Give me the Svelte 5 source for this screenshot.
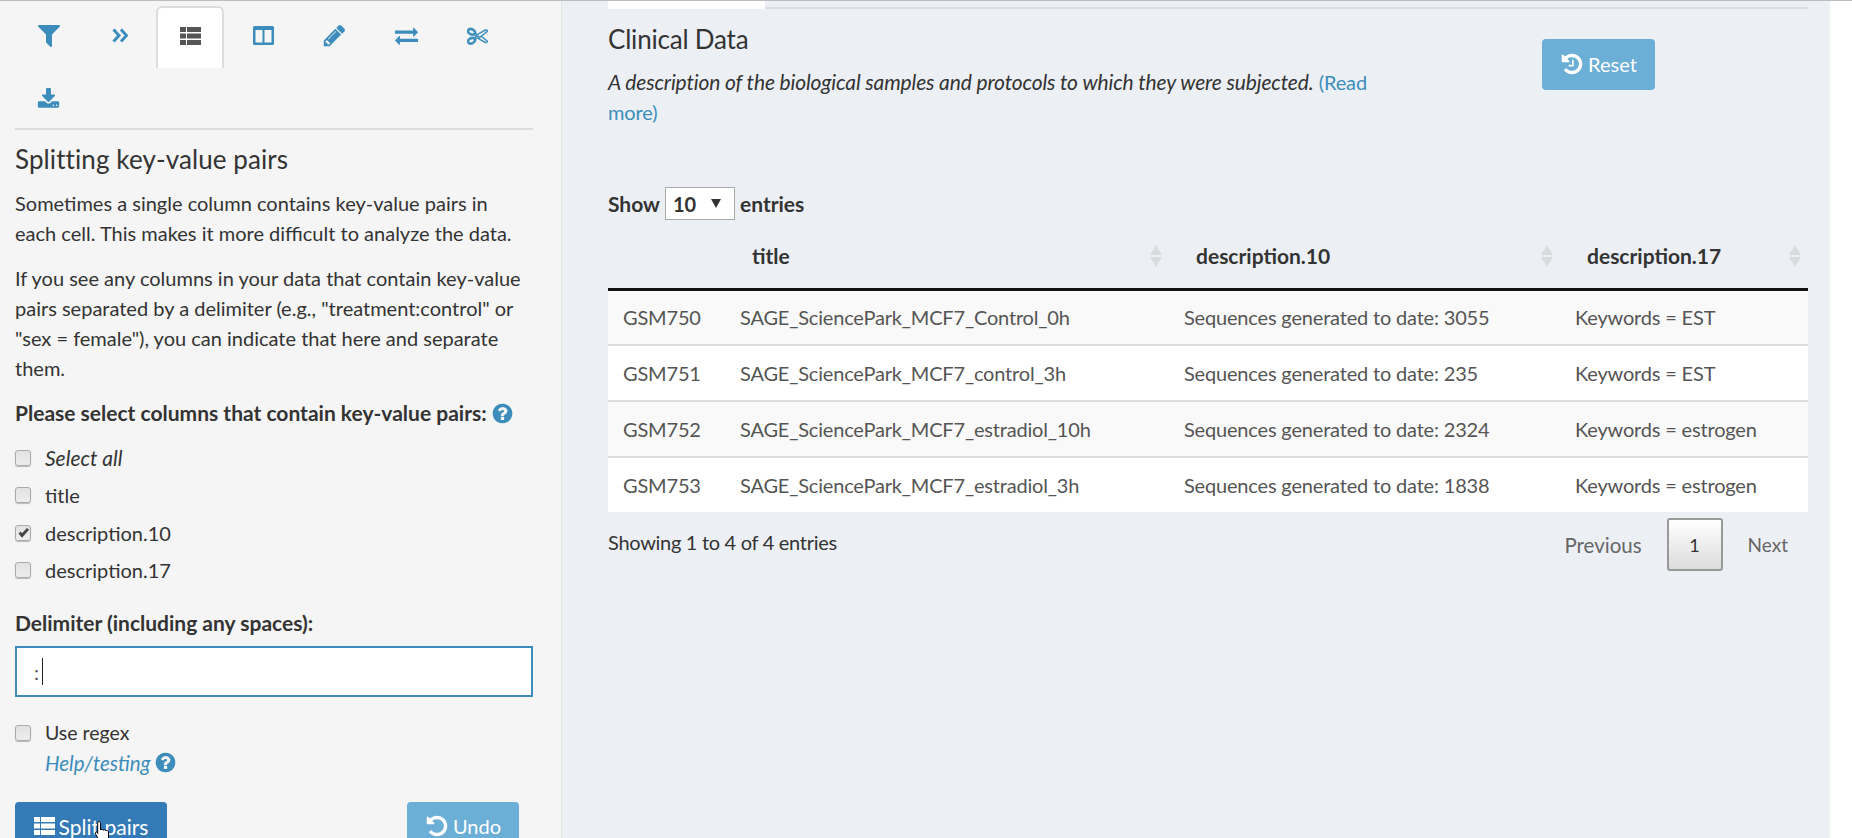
<script>
  const P = {
    filter: "M1595 295q17 41-14 70l-493 493v742q0 42-39 59-13 5-25 5-27 0-45-19l-256-256q-19-19-19-45v-486l-493-493q-31-29-14-70 17-39 59-39h1280q42 0 59 39z",
    pencil: "M491 1536l91-91-235-235-91 91v107h128v128h107zm523-928q0-22-22-22-10 0-17 7l-542 542q-7 7-7 17 0 22 22 22 10 0 17-7l542-542q7-7 7-17zm-54-192l416 416-832 832h-416v-416zm683 96q0 53-37 90l-166 166-416-416 166-165q36-38 90-38 53 0 91 38l235 234q37 39 37 91z",
    exchange: "M1792 1184v192q0 13-9.5 22.5t-22.5 9.5h-1376v192q0 13-9.5 22.5t-22.5 9.5q-12 0-24-10l-319-320q-9-9-9-22 0-14 9-23l320-320q9-9 23-9 13 0 22.5 9.5t9.5 22.5v192h1376q13 0 22.5 9.5t9.5 22.5zm0-544q0 14-9 23l-320 320q-9 9-23 9-13 0-22.5-9.5t-9.5-22.5v-192h-1376q-13 0-22.5-9.5t-9.5-22.5v-192q0-13 9.5-22.5t22.5-9.5h1376v-192q0-14 9-23t23-9q12 0 24 10l319 319q9 9 9 23z",
    scissors: "M960 896q26 0 45 19t19 45-19 45-45 19-45-19-19-45 19-45 45-19zm300 64l507 398q28 20 25 56-5 35-35 51l-128 64q-13 7-29 7-17 0-31-8l-690-387-110 66q-8 4-12 5 14 49 10 97-7 77-56 147.5t-132 123.5q-132 84-277 84-136 0-222-78-90-84-79-207 7-76 56-147t131-124q132-84 278-84 83 0 151 31 9-13 22-22l122-73-122-73q-13-9-22-22-68 31-151 31-146 0-278-84-82-53-131-124t-56-147q-5-59 15.5-113t63.5-93q85-79 222-79 145 0 277 84 83 52 132 123t56 148q4 48-10 97 4 1 12 5l110 66 690-387q14-8 31-8 16 0 29 7l128 64q30 16 35 51 3 36-25 56zm-681-260q46-42 21-108t-106-117q-92-59-192-59-74 0-113 36-46 42-21 108t106 117q92 59 192 59 74 0 113-36zm-85 745q81-51 106-117t-21-108q-39-36-113-36-100 0-192 59-81 51-106 117t21 108q39 36 113 36 100 0 192-59zm178-613l96 58v-11q0-36 33-56l14-8-79-47-26 26q-3 3-10 11t-12 12q-2 2-4 3.5t-3 2.5zm224 224l96 32 736-576-128-64-768 431v113l-160 96 9 8q2 2 7 6 4 4 11 12t11 12l26 26zm704 416l128-64-520-408-177 138q-2 3-13 7z",
    download: "M1344 1344q0-26-19-45t-45-19-45 19-19 45 19 45 45 19 45-19 19-45zm256 0q0-26-19-45t-45-19-45 19-19 45 19 45 45 19 45-19 19-45zm128-224v320q0 40-28 68t-68 28h-1472q-40 0-68-28t-28-68v-320q0-40 28-68t68-28h465l135 136q58 56 136 56t136-56l136-136h464q40 0 68 28t28 68zm-325-569q17 41-14 70l-448 448q-18 19-45 19t-45-19l-448-448q-31-29-14-70 17-39 59-39h256v-448q0-26 19-45t45-19h256q26 0 45 19t19 45v448h256q42 0 59 39z",
    question: "M1024 1376v-192q0-14-9-23t-23-9h-192q-14 0-23 9t-9 23v192q0 14 9 23t23 9h192q14 0 23-9t9-23zm256-672q0-88-55.5-163t-138.5-116-170-41q-243 0-371 213-15 24 8 42l132 100q7 6 19 6 16 0 25-12 53-68 86-92 34-24 86-24 48 0 85.5 26t37.5 59q0 38-20 61t-68 45q-63 28-115.5 86.5t-52.5 125.5v36q0 14 9 23t23 9h192q14 0 23-9t9-23q0-19 21.5-49.5t54.5-49.5q32-18 49-28.5t46-35 44.5-48 28-60.5 12.5-81zm384 192q0 209-103 385.5t-279.5 279.5-385.5 103-385.5-103-279.5-279.5-103-385.5 103-385.5 279.5-279.5 385.5-103 385.5 103 279.5 279.5 103 385.5z",
    undo: "M1664 896q0 156-61 298t-164 245-245 164-298 61q-172 0-327-72.5t-264-204.5q-7-10-6.5-22.5t8.5-20.5l137-138q10-9 25-9 16 2 23 12 73 95 179 147t225 52q104 0 198.5-40.5t163.5-109.5 109.5-163.5 40.5-198.5-40.5-198.5-109.5-163.5-163.5-109.5-198.5-40.5q-98 0-188 35.5t-160 101.5l137 138q31 30 14 69-17 40-59 40h-448q-26 0-45-19t-19-45v-448q0-42 40-59 39-17 69 14l130 129q107-101 244.5-156.5t284.5-55.5q156 0 298 61t245 164 164 245 61 298z",
    hands: "M1024 608v448q0 14-9 23t-23 9h-320q-14 0-23-9t-9-23v-64q0-14 9-23t23-9h224v-352q0-14 9-23t23-9h64q14 0 23 9t9 23z"
  };
  const thList = [[0,0,6,5],[7,0,14,5],[0,6.5,6,5],[7,6.5,14,5],[0,13,6,5],[7,13,14,5]];
  const rows = [
    ["GSM750","SAGE_SciencePark_MCF7_Control_0h","Sequences generated to date: 3055","Keywords = EST"],
    ["GSM751","SAGE_SciencePark_MCF7_control_3h","Sequences generated to date: 235","Keywords = EST"],
    ["GSM752","SAGE_SciencePark_MCF7_estradiol_10h","Sequences generated to date: 2324","Keywords = estrogen"],
    ["GSM753","SAGE_SciencePark_MCF7_estradiol_3h","Sequences generated to date: 1838","Keywords = estrogen"]
  ];
  const checks = [
    { label: "Select all", em: true, on: false },
    { label: "title", on: false },
    { label: "description.10", on: true },
    { label: "description.17", on: false }
  ];
  const heads = ["title","description.10","description.17"];
</script>

{#snippet fa(d, size, heavy = 0)}
  <svg class="fa" width={size} height={size} viewBox="0 0 1792 1792"><path {d} fill="currentColor" stroke={heavy ? "currentColor" : "none"} stroke-width={heavy} stroke-linejoin="round" /></svg>
{/snippet}
{#snippet list()}
  <svg class="fa" width="21" height="18" viewBox="0 0 21 18">
    {#each thList as r}<rect x={r[0]} y={r[1]} width={r[2]} height={r[3]} fill="currentColor" />{/each}
  </svg>
{/snippet}
{#snippet box(on)}
  <span class="box">
    {#if on}
      <svg width="13" height="12" viewBox="0 0 13 12"><path d="M1.5 6.5 L3.6 4.6 L5 6.3 L10 1 L12 2.8 L5 10.8 Z" fill="#444" /></svg>
    {/if}
  </span>
{/snippet}

<div class="page">
  <aside class="side">
    <nav class="tabs">
      <a class="tab lead">{@render fa(P.filter, 28)}</a>
      <a class="tab">
        <svg class="fa" width="16" height="15" viewBox="0 0 16 15"><path d="M1.500 1.500L7 7.500L1.500 13.500M9 1.500L14.500 7.500L9 13.500" fill="none" stroke="currentColor" stroke-width="3" /></svg>
      </a>
      <a class="tab active">{@render list()}</a>
      <a class="tab">
        <svg class="fa" width="21" height="19" viewBox="0 0 21 19"><path fill="currentColor" fill-rule="evenodd" d="M1.5 0h18A1.5 1.5 0 0 1 21 1.5v16a1.5 1.5 0 0 1-1.500 1.500h-18A1.500 1.500 0 0 1 0 17.500v-16A1.500 1.500 0 0 1 1.500 0zM2.500 4v12.500h7V4zM11.500 4v12.500h7V4z" /></svg>
      </a>
      <a class="tab">{@render fa(P.pencil, 25)}</a>
      <a class="tab">{@render fa(P.exchange, 23)}</a>
      <a class="tab">{@render fa(P.scissors, 21, 70)}</a>
      <a class="tab second lead">{@render fa(P.download, 23)}</a>
    </nav>

    <h3 class="title">Splitting key-value pairs</h3>
    <p class="para">Sometimes a single column contains key-value pairs in each cell. This makes it more difficult to analyze the data.</p>
    <p class="para">If you see any columns in your data that contain key-value pairs separated by a delimiter (e.g., "treatment:control" or "sex = female"), you can indicate that here and separate them.</p>

    <div class="label q">Please select columns that contain key-value pairs: <span class="help">{@render fa(P.question, 23)}</span></div>
    <div class="checks">
      {#each checks as c}
        <div class="check">{@render box(c.on)}<span class:em={c.em}>{c.label}</span></div>
      {/each}
    </div>

    <div class="label delim">Delimiter (including any spaces):</div>
    <div class="inputwrap">
      <input class="text" value=":" />
      <span class="caret"></span>
    </div>

    <div class="check regex">{@render box(false)}<span>Use regex</span></div>
    <div class="helplink"><em>Help/testing</em> <span class="help">{@render fa(P.question, 23)}</span></div>

    <div class="actions">
      <button class="btn primary">{@render list()}<span>Split pairs</span></button>
      <button class="btn light undo">{@render fa(P.undo, 24)}<span>Undo</span></button>
    </div>
    <svg class="hand" width="20" height="24" viewBox="0 0 20 24">
      <path d="M5 1.500c1 0 1.500.8 1.500 1.800V10c.4-1 2.500-1 2.800.3.500-1 2.500-.8 2.700.6.600-.8 2.500-.5 2.500 1V17c0 2-.6 3-1 4.500H6L1.500 14c-.8-1.500 1-2.500 2-1.500l.2 1V3.300C3.700 2.300 4.200 1.500 5 1.500z" fill="#fff" stroke="#000" stroke-width="1" />
    </svg>
  </aside>

  <main class="main">
    <div class="toptabs"><span class="toptab"></span></div>
    <div class="head">
      <div class="intro">
        <h3 class="ctitle">Clinical Data</h3>
        <p class="desc"><em>A description of the biological samples and protocols to which they were subjected.</em> <a href="#more">(Read more)</a></p>
      </div>
      <button class="btn light reset">{@render fa(P.undo + P.hands, 24)}<span>Reset</span></button>
    </div>

    <div class="show">
      <b>Show</b>
      <span class="sel"><span>10</span><i></i></span>
      <b>entries</b>
    </div>

    <table>
      <colgroup><col class="c1" /><col class="c2" /><col class="c3" /><col class="c4" /></colgroup>
      <thead>
        <tr>
          <th></th>
          {#each heads as h}
            <th>{h}
              <svg class="sort" width="12" height="22" viewBox="0 0 12 22"><path d="M6 0L12 10H0z M0 12H12L6 22z" fill="#d9dbdf" /></svg>
            </th>
          {/each}
        </tr>
      </thead>
      <tbody>
        {#each rows as r}
          <tr>{#each r as c}<td>{c}</td>{/each}</tr>
        {/each}
      </tbody>
    </table>

    <div class="foot">
      <span class="info">Showing 1 to 4 of 4 entries</span>
      <div class="pager">
        <span class="pg prev">Previous</span>
        <span class="cur">1</span>
        <span class="pg next">Next</span>
      </div>
    </div>
  </main>
</div>

<style>
  :global(body) { margin: 0; background: #fff; }
  .page {
    display: flex; width: 1852px; height: 838px; overflow: hidden;
    font-family: "Lato", "Liberation Sans", sans-serif; font-size: 20px; color: #333;
    border-top: 1px solid #bcbcbc; box-sizing: border-box;
  }
  .fa { display: block; }
  .side {
    position: relative; box-sizing: border-box; flex: none; width: 562px; padding: 5px 28px 0 15px;
    background: #f5f5f5; border-right: 1px solid #e4e4e4;
  }
  .tabs { display: flex; flex-wrap: wrap; border-bottom: 2px solid #ddd; }
  .tab {
    box-sizing: border-box; width: 71.500px; height: 62px; display: flex; align-items: center; justify-content: center;
    color: #3c8dbc; padding-bottom: 4px;
  }
  .tab.lead { margin-left: -2px; }
  .tab.active {
    width: 68px; margin-right: 3.500px; background: #fff; color: #555;
    border: 2px solid #ddd; border-bottom: 0; border-radius: 6px 6px 0 0;
  }
  .tab.second { height: 60px; padding: 2px 0 0; }
  .title { margin: 13px 0 0; font-size: 26px; font-weight: 400; line-height: 32px; letter-spacing: .1px; }
  .para { margin: 13px 0 0; line-height: 30px; max-width: 510px; }
  .para + .para { margin-top: 15px; }
  .label { font-size: 21px; font-weight: 700; line-height: 28px; }
  .label.q { margin-top: 16px; display: flex; align-items: center; gap: 4px; }
  .help { color: #3c8dbc; display: inline-block; }
  .checks { margin-top: 17px; display: flex; flex-direction: column; gap: 10px; }
  .check { display: flex; align-items: center; gap: 14px; height: 27.500px; }
  .em { font-style: italic; font-size: 21px; }
  .box {
    box-sizing: border-box; flex: none; width: 16px; height: 16px; border-radius: 3px; display: flex; align-items: center; justify-content: center;
    border: 1px solid #aaa; background: linear-gradient(#e2e2e2, #ededed); box-shadow: 0 1px 1px rgba(0,0,0,.25);
  }
  .label.delim { margin-top: 25px; }
  .inputwrap { position: relative; margin-top: 9px; }
  .text {
    display: block; box-sizing: border-box; width: 100%; height: 51px; padding: 0 0 0 17px; outline: 0;
    border: 2px solid #3c8dbc; background: #fff; font: inherit; color: #555;
  }
  .caret { position: absolute; left: 27px; top: 12px; width: 1px; height: 27px; background: #222; }
  .regex { margin-top: 22px; font-size: 19.500px; }
  .helplink { margin-left: 30px; margin-top: 2px; height: 28px; display: flex; align-items: center; gap: 4px; color: #3c8dbc; font-size: 20.500px; }
  .actions { margin-top: 25px; display: flex; justify-content: space-between; padding-right: 14px; }
  .btn {
    box-sizing: border-box; height: 51px; display: inline-flex; align-items: center; justify-content: center; gap: 4px;
    border: 0; border-radius: 4px; color: #fff; font: inherit; padding: 0 0 2px;
  }
  .primary { width: 152px; background: #337ab7; font-size: 21px; }
  .light { background: #6baed6; }
  .undo { width: 112px; }
  .hand { position: absolute; left: 94px; top: 819px; }
  .main { flex: 1; box-sizing: border-box; margin-right: 22px; padding: 0 22px 0 46px; background: #ecf0f5; }
  .toptabs { height: 6px; border-bottom: 2px solid #dcdee2; }
  .toptab { display: block; width: 157px; height: 8px; background: #fff; }
  .head { display: flex; align-items: flex-start; }
  .intro { width: 760px; }
  .ctitle { margin: 13px 0 0; font-size: 26px; font-weight: 400; line-height: 34px; letter-spacing: -.2px; }
  .desc { margin: 11px 0 0; line-height: 30px; font-size: 21px; letter-spacing: -.13px; }
  .desc a { color: #3c8dbc; text-decoration: none; font-size: 20px; }
  .reset { width: 113px; margin: 30px 0 0 174px; }
  .show { margin-top: 61px; display: flex; align-items: center; gap: 3px; height: 31px; font-size: 21px; }
  .sel {
    box-sizing: border-box; width: 70px; height: 33px; display: flex; align-items: center; justify-content: space-between;
    padding: 0 13px 0 7px; border: 1px solid #aaa; background: #fff; font-weight: 700; font-size: 20px; margin: 0 2px;
  }
  .sel i { width: 0; height: 0; border: 5px solid transparent; border-top: 9px solid #333; border-bottom: 0; }
  table { width: 1200px; table-layout: fixed; border-collapse: collapse; margin-top: 9px; }
  .c1 { width: 117px; } .c2 { width: 444px; } .c3 { width: 391px; } .c4 { width: 248px; }
  th {
    position: relative; height: 54.500px; padding: 0 0 5px 27px; text-align: left; font-weight: 700; font-size: 21px;
    border-bottom: 3px solid #111;
  }
  .sort { position: absolute; right: 7px; top: 17px; }
  td {
    height: 54px; padding: 0 0 0 15px; background: #fff; color: #555; border-top: 2px solid #ddd;
    white-space: nowrap; letter-spacing: -.18px; box-sizing: content-box;
  }
  tbody tr:first-child td { border-top: 0; height: 53.500px; }
  tbody tr:nth-child(odd) td { background: #f9f9f9; }
  .foot { display: flex; justify-content: space-between; }
  .info { margin-top: 16px; line-height: 28px; letter-spacing: -.3px; }
  .pager { display: flex; align-items: center; margin: 6px 20px 0 0; height: 53px; }
  .pg { color: #666; }
  .prev { font-size: 20.500px; }
  .next { font-size: 19px; }
  .cur {
    box-sizing: border-box; width: 56px; height: 53px; margin: 0 25px; display: flex; align-items: center; justify-content: center;
    border: 2px solid #999; border-radius: 3px; background: linear-gradient(#fff, #dcdcdc); font-size: 18px; color: #333;
  }
</style>
